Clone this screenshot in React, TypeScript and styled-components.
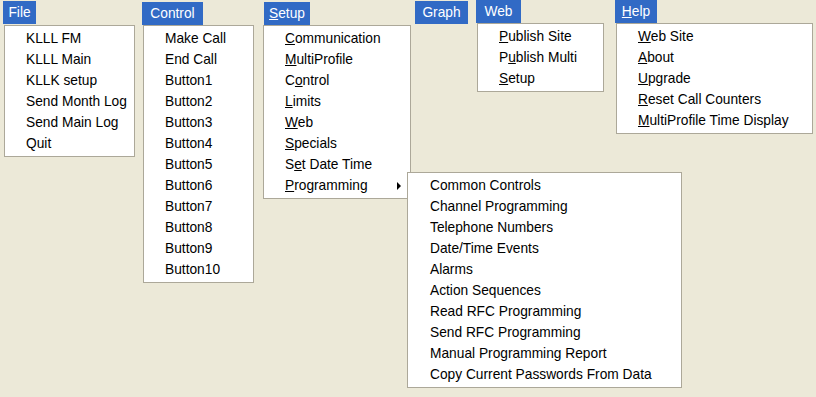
import styled, { createGlobalStyle } from "styled-components";

type Item = { label: string; key?: number; sub?: string[] };

const programming = [
  "Common Controls",
  "Channel Programming",
  "Telephone Numbers",
  "Date/Time Events",
  "Alarms",
  "Action Sequences",
  "Read RFC Programming",
  "Send RFC Programming",
  "Manual Programming Report",
  "Copy Current Passwords From Data",
];

const menus: {
  title: string;
  key?: number;
  span: number;
  titleWidth: number;
  headerTop: number;
  dropTop: number;
  dropLeft: number;
  width: number;
  items: Item[];
}[] = [
  {
    title: "File",
    span: 139,
    titleWidth: 33,
    headerTop: 1,
    dropTop: 1,
    dropLeft: 1,
    width: 131,
    items: [
      { label: "KLLL FM" },
      { label: "KLLL Main" },
      { label: "KLLK setup" },
      { label: "Send Month Log" },
      { label: "Send Main Log" },
      { label: "Quit" },
    ],
  },
  {
    title: "Control",
    span: 122,
    titleWidth: 61,
    headerTop: 2,
    dropTop: 0,
    dropLeft: 1,
    width: 111,
    items: [
      "Make Call",
      "End Call",
      "Button1",
      "Button2",
      "Button3",
      "Button4",
      "Button5",
      "Button6",
      "Button7",
      "Button8",
      "Button9",
      "Button10",
    ].map((label) => ({ label })),
  },
  {
    title: "Setup",
    key: 0,
    span: 151,
    titleWidth: 46,
    headerTop: 2,
    dropTop: 0,
    dropLeft: -1,
    width: 148,
    items: [
      { label: "Communication", key: 0 },
      { label: "MultiProfile", key: 0 },
      { label: "Control", key: 1 },
      { label: "Limits", key: 0 },
      { label: "Web", key: 0 },
      { label: "Specials", key: 0 },
      { label: "Set Date Time", key: 1 },
      { label: "Programming", key: 0, sub: programming },
    ],
  },
  {
    title: "Graph",
    span: 61,
    titleWidth: 53,
    headerTop: 1,
    dropTop: 0,
    dropLeft: 0,
    width: 0,
    items: [],
  },
  {
    title: "Web",
    span: 139,
    titleWidth: 45,
    headerTop: 0,
    dropTop: 0,
    dropLeft: 1,
    width: 127,
    items: [
      { label: "Publish Site", key: 0 },
      { label: "Publish Multi", key: 1 },
      { label: "Setup", key: 0 },
    ],
  },
  {
    title: "Help",
    key: 0,
    span: 198,
    titleWidth: 42,
    headerTop: 0,
    dropTop: 0,
    dropLeft: 1,
    width: 197,
    items: [
      { label: "Web Site", key: 0 },
      { label: "About", key: 0 },
      { label: "Upgrade", key: 0 },
      { label: "Reset Call Counters", key: 0 },
      { label: "MultiProfile Time Display", key: 0 },
    ],
  },
];

function Label({ text, k }: { text: string; k?: number }) {
  if (k === undefined) return <>{text}</>;
  return (
    <>
      {text.slice(0, k)}
      <u>{text[k]}</u>
      {text.slice(k + 1)}
    </>
  );
}

export default function App() {
  return (
    <>
      <GlobalStyle />
      <Screen>
        {menus.map((m) => (
          <MenuColumn key={m.title} $span={m.span}>
            <MenuTitle $top={m.headerTop} $width={m.titleWidth}>
              <Label text={m.title} k={m.key} />
            </MenuTitle>
            {m.items.length > 0 && (
              <Dropdown $width={m.width} $top={m.dropTop} $left={m.dropLeft}>
                {m.items.map((it) => (
                  <MenuItem key={it.label}>
                    <Label text={it.label} k={it.key} />
                    {it.sub && (
                      <>
                        <Arrow />
                        <SubMenu>
                          {it.sub.map((s) => (
                            <MenuItem key={s}>{s}</MenuItem>
                          ))}
                        </SubMenu>
                      </>
                    )}
                  </MenuItem>
                ))}
              </Dropdown>
            )}
          </MenuColumn>
        ))}
      </Screen>
    </>
  );
}

const GlobalStyle = createGlobalStyle`
  html, body {
    margin: 0;
    padding: 0;
    background: #ece9d8;
  }
  body {
    font-family: "Liberation Sans", Arial, sans-serif;
    font-size: 13.75px;
    color: #000;
  }
`;

const Screen = styled("div")`
  display: flex;
  align-items: flex-start;
  width: 816px;
  height: 397px;
  padding-left: 3px;
  box-sizing: border-box;
  overflow: hidden;
  background: #ece9d8;
`;

const MenuColumn = styled("div")<{ $span: number }>`
  display: flex;
  flex-direction: column;
  align-items: flex-start;
  flex: 0 0 ${(p) => p.$span}px;
  width: ${(p) => p.$span}px;
`;

const MenuTitle = styled("div")<{ $top: number; $width: number }>`
  margin-top: ${(p) => p.$top}px;
  width: ${(p) => p.$width}px;
  height: 23px;
  line-height: 23px;
  text-align: center;
  background: #316ac5;
  color: #fff;
`;

const Dropdown = styled("ul")<{ $width: number; $top: number; $left: number }>`
  position: relative;
  list-style: none;
  margin: ${(p) => p.$top}px 0 0 ${(p) => p.$left}px;
  padding: 2px 0;
  width: ${(p) => p.$width}px;
  box-sizing: border-box;
  background: #fff;
  border: 1px solid #aca899;
`;

const MenuItem = styled("li")`
  position: relative;
  height: 21px;
  line-height: 21px;
  padding-left: 21px;
  white-space: nowrap;
`;

const Arrow = styled("span")`
  position: absolute;
  right: 9px;
  top: 7px;
  width: 0;
  height: 0;
  border-top: 4px solid transparent;
  border-bottom: 4px solid transparent;
  border-left: 4px solid #000;
`;

const SubMenu = styled("ul")`
  position: absolute;
  left: 143px;
  top: -3px;
  z-index: 2;
  list-style: none;
  margin: 0;
  padding: 2px 0;
  width: 275px;
  box-sizing: border-box;
  background: #fff;
  border: 1px solid #aca899;
  & > li {
    padding-left: 22px;
  }
`;
